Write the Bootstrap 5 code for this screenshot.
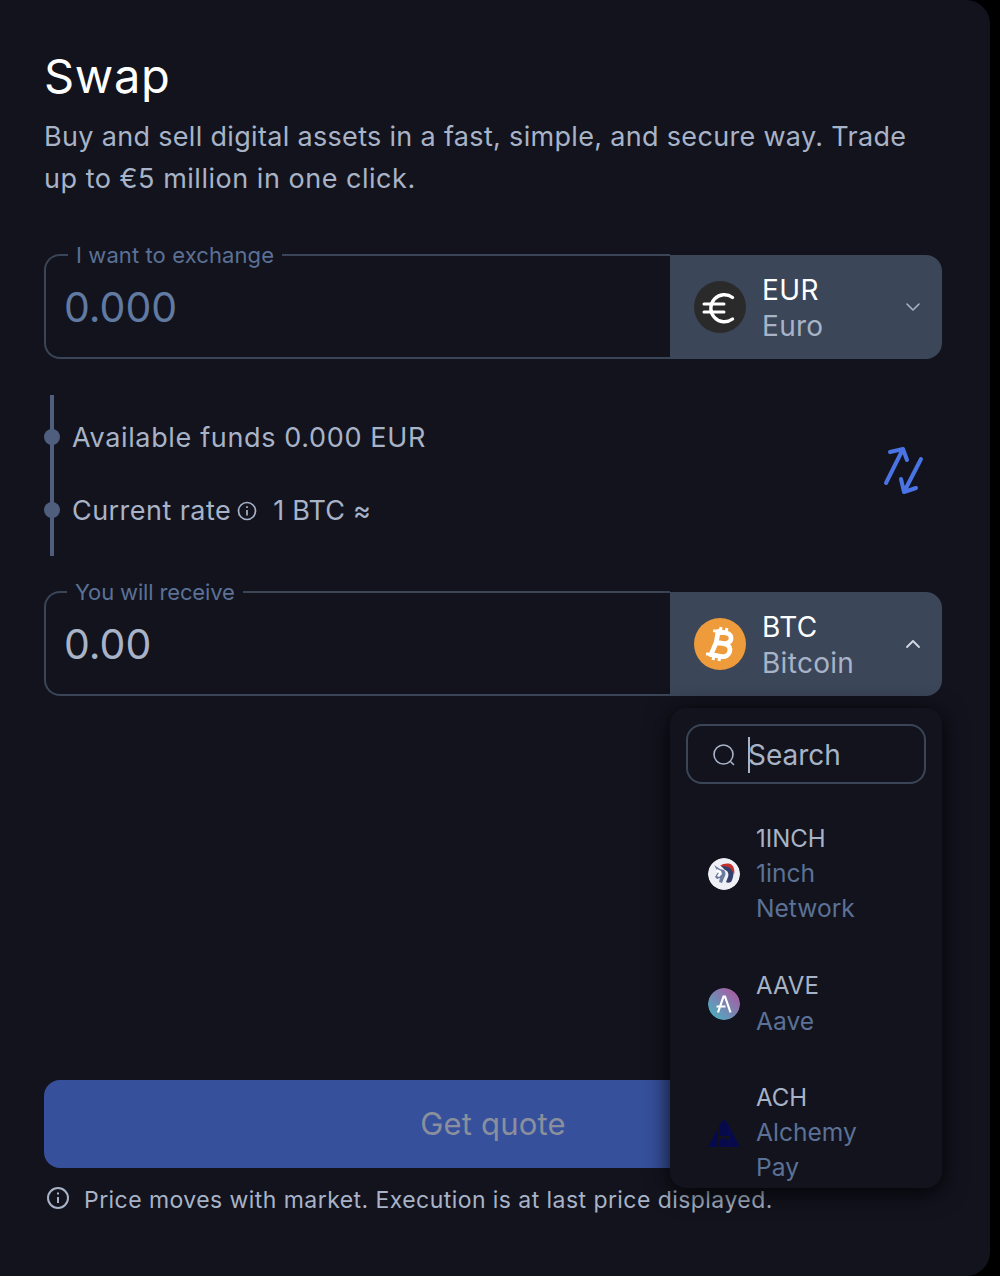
<!DOCTYPE html>
<html lang="en">
<head>
<meta charset="utf-8">
<title>Swap</title>
<link href="https://cdn.jsdelivr.net/npm/bootstrap@5.3.0/dist/css/bootstrap.min.css" rel="stylesheet">
<style>
html,body{height:100%;}
body{background:#000;font-family:Inter,"Liberation Sans",sans-serif;color:#a8b3c7;overflow:hidden;}
.swap-panel{width:990px;height:1276px;background:#12131d;border-radius:0 24px 24px 0;padding:48px 48px 0 44px;position:relative;}
.swap-title{font-size:47px;line-height:56px;font-weight:400;color:#fff;margin:0 0 12px 0;letter-spacing:.65px;}
.swap-sub{font-size:27px;line-height:42px;letter-spacing:.32px;color:#a8b3c7;margin:0;}
.sub-second{letter-spacing:.52px;}
.amount-row{height:104px;}
.amount-first{margin-top:55px;}
.amount-box{flex:1 1 auto;min-width:0;margin:-11px 0 0;padding:0 0 0 18px;border:2px solid #3a4658;border-right:0;border-radius:16px 0 0 16px;height:115px;}
.amount-box legend{float:none;width:auto;margin:0 0 0 4px;padding:0 8px;font-size:22px;line-height:22px;letter-spacing:.1px;color:#5b7196;}
.amount-box legend.legend-tight{margin-left:3px;letter-spacing:-.15px;}
.amount-val{font-size:41px;line-height:50px;color:#617aa1;margin-top:16px;}
.amount-val.filled{color:#a8b3c7;}
.coin-select{width:272px;height:104px;background:#3b4659;border-radius:0 16px 16px 0;padding:0 21px 0 24px;}
.coin-ic{width:52px;height:52px;border-radius:50%;flex:none;}
.coin-euro{background:#2a2a2a;}
.coin-btc{background:#ee9b3c;}
.coin-label{padding-top:2px;}
.coin-sym{font-size:28px;line-height:36px;color:#fff;letter-spacing:.4px;}
.coin-name{font-size:28px;line-height:36px;color:#a8b3c7;letter-spacing:.3px;}
.rate-wrap{height:233px;padding-top:36px;}
.rate-line{width:4px;height:161px;background:#4f5e7d;margin-left:6px;position:relative;flex:none;}
.rate-dot{position:absolute;left:-6px;width:16px;height:16px;border-radius:50%;background:#4f5e7d;}
.rate-dot.d1{top:34px;}
.rate-dot.d2{top:107px;}
.rate-txt{font-size:27px;line-height:40px;letter-spacing:.65px;color:#a8b3c7;margin-left:18px;padding-top:23px;}
.rate-one{height:73px;}
.rate-cur{letter-spacing:.45px;}
.rate-info{margin:0 6px 0 6px;}
.rate-val{margin-left:10px;letter-spacing:.2px;}
.swap-ic{margin:51px 17px 0 auto;}
.quote-btn{margin-top:384px;height:88px;width:898px;background:#37509c;border:0;border-radius:16px;color:#8a8f9d;font-size:31px;letter-spacing:.2px;display:block;}
.note{margin-top:14px;font-size:23px;line-height:36px;letter-spacing:.44px;color:#a8b3c7;}
.note-ic{margin:-4px 15px 0 3px;flex:none;}
.coin-menu{position:absolute;left:670px;top:708px;width:272px;height:480px;background:#12131d;border-radius:16px;box-shadow:0 4px 24px rgba(0,0,0,.85);overflow:hidden;padding:16px;}
.search-box{height:60px;border:2px solid #3a4658;border-radius:16px;padding-left:24px;color:#a8b3c7;font-size:28px;padding-top:1px;}
.caret-bar{width:2px;height:36px;background:#a8b3c7;margin-left:12px;margin-right:-2px;}
.coin-row{padding-left:22px;}
.coin-mini{width:32px;height:32px;border-radius:50%;flex:none;margin-right:16px;}
.coin-list{margin-top:38px;}
.mini-sym{font-size:24px;line-height:34.4px;color:#a8b3c7;}
.mini-name{font-size:24.6px;line-height:34.4px;color:#5b7196;}
.coin-gap{margin-top:44px;}
.coin-gap-b{margin-top:43px;}
</style>
</head>
<body>
<main class="swap-panel">
  <h1 class="swap-title">Swap</h1>
  <p class="swap-sub">Buy and sell digital assets in a fast, simple, and secure way. Trade<br><span class="sub-second">up to €5 million in one click.</span></p>

  <div class="d-flex amount-row amount-first">
    <fieldset class="amount-box">
      <legend>I want to exchange</legend>
      <div class="amount-val">0.000</div>
    </fieldset>
    <div class="coin-select d-flex align-items-center">
      <svg class="coin-ic coin-euro" viewBox="0 0 52 52" fill="none" stroke="#fff" stroke-linecap="round"><path d="M38.500 16.500A13.500 13.500 0 1 0 38.500 38" stroke-width="3.400"/><path d="M10 23h20M10 31h20" stroke-width="3"/></svg>
      <div class="ms-3 flex-grow-1 coin-label">
        <div class="coin-sym">EUR</div>
        <div class="coin-name">Euro</div>
      </div>
      <svg width="16" height="10" viewBox="0 0 16 10" fill="none" stroke="#a8b3c7" stroke-width="1.6" stroke-linecap="round" stroke-linejoin="round"><path d="M2 2l6 6 6-6"/></svg>
    </div>
  </div>

  <div class="rate-wrap d-flex">
    <div class="rate-line"><span class="rate-dot d1"></span><span class="rate-dot d2"></span></div>
    <div class="rate-txt">
      <div class="rate-one">Available funds 0.000 EUR</div>
      <div class="d-flex align-items-center rate-cur">Current rate
        <svg class="rate-info" width="20" height="20" viewBox="0 0 20 20" fill="none" stroke="#a8b3c7" stroke-width="1.7"><circle cx="10" cy="10" r="8.500"/><path d="M10 9v5.500M10 5.200v1.800"/></svg>
        <span class="rate-val">1 BTC ≈</span>
      </div>
    </div>
    <svg class="swap-ic" width="42" height="50" viewBox="0 0 42 50" fill="none" stroke="#4a74e6" stroke-width="4" stroke-linecap="round" stroke-linejoin="round"><path d="M3 37L20 3M7 6l13-3 4 11M38 13L21 46M18 33l3 13 12-4"/></svg>
  </div>

  <div class="d-flex amount-row">
    <fieldset class="amount-box">
      <legend class="legend-tight">You will receive</legend>
      <div class="amount-val filled">0.00</div>
    </fieldset>
    <div class="coin-select d-flex align-items-center">
      <div class="coin-ic coin-btc d-flex align-items-center justify-content-center">
        <svg width="30" height="38" viewBox="0 0 30 38" fill="none" stroke="#fff" stroke-width="4.800" stroke-linejoin="round"><g transform="rotate(10 15 19)"><path d="M11 7h8c8 0 8 10 0 11h-8zM11 18h9c9 1 7 13-1 13H8z"/><path d="M13 2v5M19 2v5M11 31v5M17 31v5M6 7h6M3 31h7" stroke-width="3"/></g></svg>
      </div>
      <div class="ms-3 flex-grow-1 coin-label">
        <div class="coin-sym">BTC</div>
        <div class="coin-name">Bitcoin</div>
      </div>
      <svg width="16" height="10" viewBox="0 0 16 10" fill="none" stroke="#d3d9e3" stroke-width="1.8" stroke-linecap="round" stroke-linejoin="round"><path d="M2 8l6-6 6 6"/></svg>
    </div>
  </div>

  <button class="quote-btn" type="button">Get quote</button>

  <div class="note d-flex align-items-center">
    <svg class="note-ic" width="22" height="22" viewBox="0 0 22 22" fill="none" stroke="#a8b3c7" stroke-width="2"><circle cx="11" cy="11" r="10"/><path d="M11 10v6M11 5.500v2"/></svg>
    <span>Price moves with market. Execution is at last price displayed.</span>
  </div>

  <div class="coin-menu">
    <div class="search-box d-flex align-items-center">
      <svg width="24" height="24" viewBox="0 0 24 24" fill="none" stroke="#a8b3c7" stroke-width="1.600" stroke-linecap="round"><circle cx="11.500" cy="11.500" r="9.500"/><path d="M19 19l2.500 2.500"/></svg>
      <span class="caret-bar"></span><span>Search</span>
    </div>
    <div class="coin-list">
      <div class="coin-row d-flex align-items-center">
        <svg class="coin-mini" viewBox="0 0 32 32"><circle cx="16" cy="16" r="16" fill="#eef0f5"/><path d="M13 8c4-2 9-1 11 2 2 4 2 9-1 14-2 1-4 1-5 0l2-5c1-3 0-6-3-7z" fill="#33406b"/><path d="M12 8c4-3 9-3 12-1 2 2 3 6 2 10-1-4-3-7-6-8-3-1-5-1-8-1z" fill="#c4322f"/><path d="M6 7l6 4 4 1c2 2 2 5 0 8l-2 5-3-1 1-4-3 1-2-2 3-5z" fill="#6c7a9c"/><path d="M9 11l4 2 1 3-3 3-2-1 2-3-3-1z" fill="#fff"/></svg>
        <div><div class="mini-sym">1INCH</div><div class="mini-name">1inch<br>Network</div></div>
      </div>
      <div class="coin-row d-flex align-items-center coin-gap">
        <svg class="coin-mini" viewBox="0 0 32 32"><defs><linearGradient id="aaveg" x1="0" y1="1" x2="1" y2="0"><stop offset="0" stop-color="#3fb8c4"/><stop offset="1" stop-color="#b6509e"/></linearGradient></defs><circle cx="16" cy="16" r="16" fill="url(#aaveg)"/><path d="M10 24.500L15.500 8.500h1.500L22.500 24.500M8.500 18.500h9" fill="none" stroke="#fff" stroke-width="2.200"/></svg>
        <div><div class="mini-sym">AAVE</div><div class="mini-name">Aave</div></div>
      </div>
      <div class="coin-row d-flex align-items-center coin-gap-b">
        <svg class="coin-mini rounded-0" viewBox="0 0 32 32"><path d="M0 30l10-19v19zM11 9l5-7 5 7v10H11zM11 23l5-2 5 2v7H11zM22 11l10 19H22z" fill="#07094d"/></svg>
        <div><div class="mini-sym">ACH</div><div class="mini-name">Alchemy<br>Pay</div></div>
      </div>
    </div>
  </div>
</main>
<script src="https://cdn.jsdelivr.net/npm/bootstrap@5.3.0/dist/js/bootstrap.bundle.min.js"></script>
</body>
</html>
